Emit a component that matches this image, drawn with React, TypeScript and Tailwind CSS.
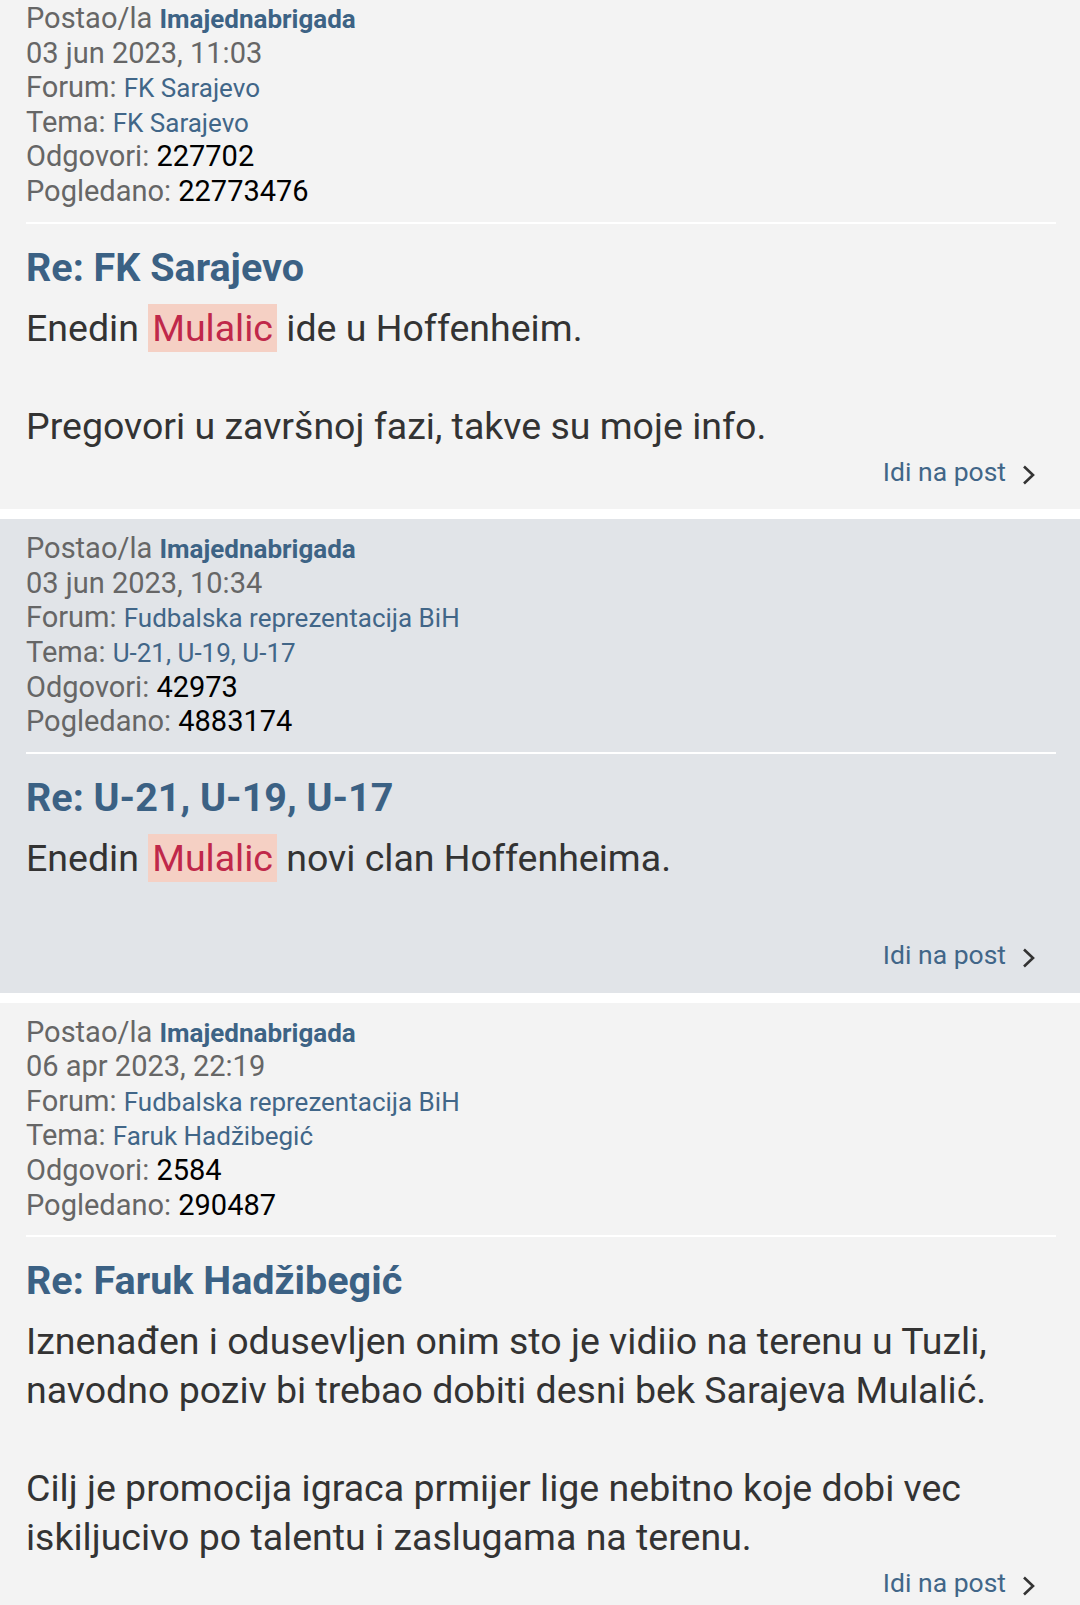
import React from 'react'

type Post = {
  date: string
  forum: string
  topic: string
  replies: string
  views: string
  title: string
  body: React.ReactNode[]
  alt?: boolean
}

const Hl = ({ children }: { children: React.ReactNode }) => (
  <span className="bg-[#f5d0c4] text-[#c0284a] px-[4px] py-[2px]">{children}</span>
)

const POSTS: Post[] = [
  {
    date: '03 jun 2023, 11:03',
    forum: 'FK Sarajevo',
    topic: 'FK Sarajevo',
    replies: '227702',
    views: '22773476',
    title: 'Re: FK Sarajevo',
    body: [
      <>
        Enedin <Hl>Mulalic</Hl> ide u Hoffenheim.
      </>,
      '',
      'Pregovori u završnoj fazi, takve su moje info.',
    ],
  },
  {
    date: '03 jun 2023, 10:34',
    forum: 'Fudbalska reprezentacija BiH',
    topic: 'U-21, U-19, U-17',
    replies: '42973',
    views: '4883174',
    title: 'Re: U-21, U-19, U-17',
    body: [
      <>
        Enedin <Hl>Mulalic</Hl> novi clan Hoffenheima.
      </>,
      '',
    ],
    alt: true,
  },
  {
    date: '06 apr 2023, 22:19',
    forum: 'Fudbalska reprezentacija BiH',
    topic: 'Faruk Hadžibegić',
    replies: '2584',
    views: '290487',
    title: 'Re: Faruk Hadžibegić',
    body: [
      'Iznenađen i odusevljen onim sto je vidiio na terenu u Tuzli,',
      'navodno poziv bi trebao dobiti desni bek Sarajeva Mulalić.',
      '',
      'Cilj je promocija igraca prmijer lige nebitno koje dobi vec',
      'iskiljucivo po talentu i zaslugama na terenu.',
    ],
  },
]

const Chevron = () => (
  <svg width="14" height="20" viewBox="0 0 14 20" fill="none" className="ml-[16px] mt-[10px]">
    <path d="M2 1.5 L11 10 L2 18.5" stroke="#333" strokeWidth="2.6" />
  </svg>
)

const SearchPost = ({ post }: { post: Post }) => (
  <div className={`mb-[10px] pt-[12px] pb-[20px] pl-[26px] pr-[24px] ${post.alt ? 'bg-[#e1e4e8]' : 'bg-[#f3f3f3]'}`}>
    <div className="text-[29px] leading-[34.6px] text-[#666]">
      <div>
        Postao/la <span className="font-bold text-[#3d6385] text-[26px] leading-none">Imajednabrigada</span>
      </div>
      <div>{post.date}</div>
      <div>
        Forum: <span className="text-[#416688] text-[26px] leading-none">{post.forum}</span>
      </div>
      <div>
        Tema: <span className="text-[#416688] text-[26px] leading-none">{post.topic}</span>
      </div>
      <div>
        Odgovori: <span className="text-black">{post.replies}</span>
      </div>
      <div>
        Pogledano: <span className="text-black">{post.views}</span>
      </div>
    </div>
    <div className="mt-[13px] h-[2px] bg-white" />
    <h3 className="mt-[20px] text-[39.5px] leading-[48px] font-bold text-[#3b6184]">{post.title}</h3>
    <div className="mt-[12px] text-[37.5px] leading-[49px] text-[#333]">
      {post.body.map((line, i) => (
        <div key={i}>{line === '' ? '\u00a0' : line}</div>
      ))}
    </div>
    <div
      className={`${post.alt ? 'mt-[6px]' : 'mt-[4px]'} flex justify-end pr-[20px] text-[26.5px] leading-[34.7px] text-[#416688]`}
    >
      <span>Idi na post</span>
      <Chevron />
    </div>
  </div>
)

export default function App() {
  return (
    <div className="bg-white min-h-screen font-['Roboto',sans-serif] overflow-hidden">
      <div className="-mt-[11px]">
        {POSTS.map((p, i) => (
          <SearchPost key={i} post={p} />
        ))}
      </div>
    </div>
  )
}
